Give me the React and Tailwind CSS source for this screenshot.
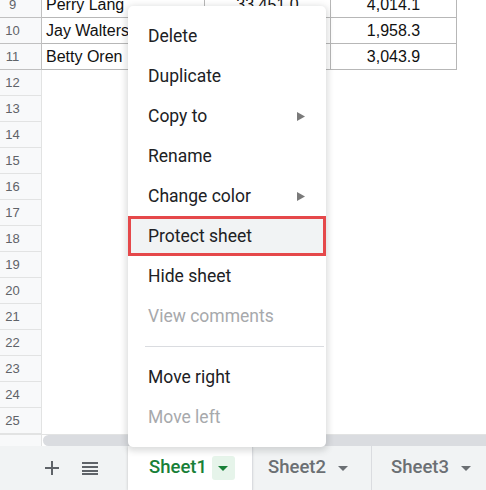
import React from "react";

const rows = [
  { n: 9, name: "Perry Lang", b: "33,451.0", c: "4,014.1" },
  { n: 10, name: "Jay Walters", b: "12,345.0", c: "1,958.3" },
  { n: 11, name: "Betty Oren", b: "25,365.0", c: "3,043.9" },
];

const menuItems = [
  { label: "Delete" },
  { label: "Duplicate" },
  { label: "Copy to", sub: true },
  { label: "Rename" },
  { label: "Change color", sub: true },
  { label: "Protect sheet", active: true },
  { label: "Hide sheet" },
  { label: "View comments", disabled: true },
];

const SubArrow = () => (
  <svg width="8" height="9" viewBox="0 0 8 9" className="absolute right-[21px] top-[16px]">
    <polygon points="0,0 8,4.5 0,9" fill="#7a7a7a" />
  </svg>
);

const Caret = ({ color }) => (
  <svg width="10" height="5" viewBox="0 0 10 5">
    <polygon points="0,0 10,0 5,5" fill={color} />
  </svg>
);

const MenuItem = ({ item }) => (
  <div
    className={
      "relative h-[40px] flex items-center text-[17.5px] " +
      (item.disabled ? "text-[#a7a9ac] " : "text-[#202124] ") +
      (item.active ? "bg-[#f1f3f4] border-[3px] border-[#e5484a] pl-[17px]" : "pl-[20px]")
    }
  >
    {item.label}
    {item.sub && <SubArrow />}
  </div>
);

export default function App() {
  const emptyRows = [];
  for (let i = 12; i <= 25; i++) emptyRows.push(i);

  return (
    <div className="relative w-[486px] h-[490px] overflow-hidden bg-white font-['Liberation_Sans',Arial,sans-serif]">
      <div className="flex flex-col h-[490px]">
        {/* grid */}
        <div className="h-[434px] overflow-hidden">
          <div className="-mt-[8px]">
            {rows.map((r) => (
              <div key={r.n} className="flex h-[26px]">
                <div className="w-[42px] shrink-0 bg-[#f8f9fa] border-r border-b border-[#c0c0c0] flex items-center text-[13px] text-[#5f6368]">
                  <span className="w-[25px] text-center">{r.n}</span>
                </div>
                <div className="w-[163px] border-b border-r border-[#b7b7b7] flex items-center pl-[4px] text-[16px] text-[#111] whitespace-nowrap overflow-hidden">
                  {r.name}
                </div>
                <div className="w-[126px] border-b border-r border-[#b7b7b7] flex items-center justify-center text-[16px] text-[#111]">
                  {r.b}
                </div>
                <div className="w-[126px] border-b border-r border-[#b7b7b7] flex items-center justify-center text-[16px] text-[#111]">
                  {r.c}
                </div>
              </div>
            ))}
            {emptyRows.map((n) => (
              <div key={n} className="flex h-[26px]">
                <div className="w-[42px] shrink-0 bg-[#f8f9fa] border-r border-b border-[#e2e3e3] flex items-center text-[13px] text-[#5f6368]">
                  <span className="w-[25px] text-center">{n}</span>
                </div>
              </div>
            ))}
          </div>
        </div>

        {/* scrollbar */}
        <div className="flex h-[12px] border-t border-[#e2e3e3]">
          <div className="w-[42px] shrink-0 bg-[#f8f9fa] border-r border-[#e2e3e3]" />
          <div className="flex-1 ml-[1px] rounded-l-full bg-[#dadce0]" />
        </div>

        {/* sheet tabs */}
        <div className="flex h-[44px] bg-[#f1f3f4] items-stretch">
          <div className="w-[128px] flex items-center pl-[45px] gap-[23px] text-[#5f6368]">
            <svg width="14" height="14" viewBox="0 0 14 14">
              <path d="M6 0h2v6h6v2H8v6H6V8H0V6h6z" fill="#5f6368" />
            </svg>
            <svg width="16" height="14" viewBox="0 0 16 14">
              <path d="M0 1h16v2H0zM0 5h16v2H0zM0 9h16v2H0zM0 12h16v2H0z" fill="#5f6368" />
            </svg>
          </div>
          <div className="w-[124px] bg-white flex items-center pl-[21px] shadow-[0_1px_3px_rgba(0,0,0,0.2)]">
            <span className="font-['Roboto',sans-serif] text-[18.5px] font-medium text-[#188038]">Sheet1</span>
            <div className="ml-[5px] w-[23px] h-[24px] bg-[#e6f4ea] rounded-[3px] flex items-center justify-center">
              <Caret color="#188038" />
            </div>
          </div>
          <div className="w-[119px] border-l border-[#dadce0] flex items-center pl-[15px] gap-[12px]">
            <span className="font-['Roboto',sans-serif] text-[18.5px] font-medium text-[#6b6f73]">Sheet2</span>
            <Caret color="#6b6f73" />
          </div>
          <div className="flex-1 border-l border-[#dadce0] flex items-center pl-[19px] gap-[12px]">
            <span className="font-['Roboto',sans-serif] text-[18.5px] font-medium text-[#6b6f73]">Sheet3</span>
            <Caret color="#6b6f73" />
          </div>
        </div>
      </div>

      {/* context menu */}
      <div className="absolute left-[128px] top-[6px] w-[198px] bg-white rounded-[5px] shadow-[0_2px_6px_2px_rgba(60,64,67,0.18)] py-[10px] font-['Roboto',sans-serif]">
        {menuItems.map((it) => (
          <MenuItem key={it.label} item={it} />
        ))}
        <div className="h-[1px] bg-[#dadce0] ml-[17px] mr-[2px] my-[10px]" />
        <MenuItem item={{ label: "Move right" }} />
        <MenuItem item={{ label: "Move left", disabled: true }} />
      </div>
    </div>
  );
}
